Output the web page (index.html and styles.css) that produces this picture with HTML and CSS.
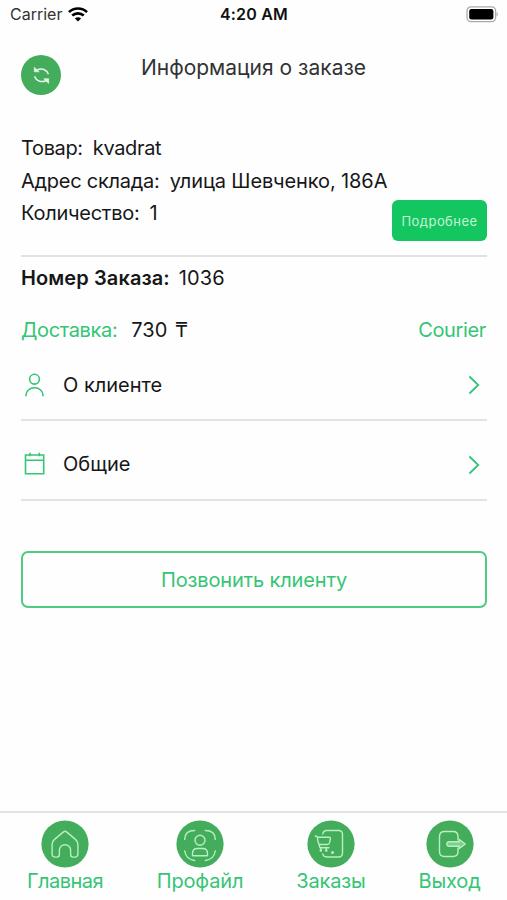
FILE: index.html
```html
<!DOCTYPE html>
<html lang="ru">
<head>
<meta charset="utf-8">
<meta name="viewport" content="width=device-width, initial-scale=1">
<title>Информация о заказе</title>
<link rel="stylesheet" href="styles.css">
</head>
<body>
<div class="status">
  <div class="carrier"><span>Carrier</span>
    <svg width="20" height="15" viewBox="0 0 20 15" fill="none" stroke="#000" stroke-width="2.7"><path d="M1 5.1C6 .3 14 .3 19 5.1M4.2 8.6c3.4-3.1 8.2-3.1 11.6 0"/><path d="M10 14.5 6.9 11.4c1.8-1.6 4.4-1.6 6.2 0z" fill="#000" stroke="none"/></svg>
  </div>
  <time class="clock">4:20 AM</time>
  <svg class="battery" width="33" height="17" viewBox="0 0 33 17"><rect x="2" y=".8" width="28.6" height="14.8" rx="4" fill="#fff" stroke="#aaa" stroke-width="1.3"/><rect x="4.2" y="2.9" width="24.2" height="10.6" rx="2.3"/><path d="M31.6 6v4.5q1.2-.8 1.2-2.2T31.6 6z" fill="#aaa"/></svg>
</div>
<header class="header">
  <button class="refresh" aria-label="Обновить">
    <svg width="40" height="40" viewBox="0 0 40 40" fill="none" stroke="#e4f5e7" stroke-width="1.5"><path d="M16 15c5-2.4 9.800-.3 11.500 4.300M25 25.700c-5 2.200-9.800 0-11.500-4.300"/><path d="M13.300 12.200v4.600h5zM27.700 28.500v-4.800h-5z" fill="#e4f5e7" stroke-width=".6"/></svg>
  </button>
  <h1 class="title">Информация о заказе</h1>
</header>
<main class="content">
  <section class="product">
    <div class="lines">
      <p><span class="product-key">Товар:</span><span class="product-name">kvadrat</span></p>
      <p><span class="address-key">Адрес склада:</span><span class="address">улица Шевченко, 186A</span></p>
      <p><span class="count-key">Количество:</span><span>1</span></p>
    </div>
    <button class="more">Подробнее</button>
  </section>
  <p class="number"><b>Номер Заказа:</b><span>1036</span></p>
  <p class="delivery"><span class="delivery-key">Доставка:</span><span class="price">730 ₸</span><span class="courier">Courier</span></p>
  <a class="row row-client">
    <svg width="26" height="26" viewBox="0 0 26 26" fill="none" stroke="#35c575" stroke-width="1.6"><circle cx="13.5" cy="7.2" r="4.9"/><path d="M5 24.300v-.7c0-4.500 3.500-7.800 8.500-7.800s8.500 3.300 8.500 7.800v.7"/></svg>
    <span class="client-label">О клиенте</span>
    <svg class="chevron" width="12" height="20" viewBox="0 0 12 20" fill="none" stroke="#35c575" stroke-width="1.8"><path d="m1.4 1.500 8.900 8.500-8.900 8.500"/></svg>
  </a>
  <a class="row row-common">
    <svg width="26" height="26" viewBox="0 0 26 26" fill="none" stroke="#35c575" stroke-width="1.6"><path d="M4.500 4h18.200v18.700H4.500zM4.500 9.200h18.200M9 1.700v3.500M18.300 1.700v3.500"/></svg>
    <span class="common-label">Общие</span>
    <svg class="chevron" width="12" height="20" viewBox="0 0 12 20" fill="none" stroke="#35c575" stroke-width="1.8"><path d="m1.4 1.500 8.900 8.500-8.900 8.500"/></svg>
  </a>
  <button class="call">Позвонить клиенту</button>
</main>
<nav class="tabs">
  <a class="tab tab-home"><svg viewBox="0 0 48 48"><circle cx="24" cy="24" r="23.6"/><path d="m22.500 11.900-9 7.500q-2.400 2-2.400 5v9.400q0 3.300 3.300 3.300h1.500q2.500 0 2.500-2.500v-4.300a5.600 5.600 0 0 1 11.200 0v4.300q0 2.500 2.500 2.500h1.500q3.300 0 3.300-3.300v-9.400q0-3-2.400-5l-9-7.500q-1.500-1.200-3 0z"/></svg><span>Главная</span></a>
  <a class="tab tab-profile"><svg viewBox="0 0 48 48"><circle cx="24" cy="24" r="23.6"/><path d="M8.700 19.500q0-9 10-9M29.300 10.500q10 0 10 9M8.700 31q1.500 8.500 10 9.500M29.300 40.500q8.500-1 10-9.500"/><path d="M24 15.300a5 5 0 1 1 0 10 5 5 0 0 1 0-10zM16.500 35.700v-2.200q0-5 5-5h5q5 0 5 5v2.200z"/></svg><span>Профайл</span></a>
  <a class="tab tab-orders"><svg viewBox="0 0 48 48"><circle cx="24" cy="24" r="23.6"/><path d="M15.800 14q.5-3.500 4-3.500H31.500q4 0 4 4V33q0 4-4 4H19.800q-3.500 0-4-3"/><path d="m8.300 16 2 .7.800 5.300q.4 2.500 2.700 2.500h6.700q1.700 0 2.100-1.800l.8-4.200q.2-1.300-1.200-1.300H10.500M12 24.500l1 3.200h9"/><path d="M13.800 27.500v3M19.300 27.500v3"/><g class="dots"><circle cx="13.800" cy="30.500" r="1.300"/><circle cx="19.300" cy="30.500" r="1.300"/><circle cx="25.500" cy="32.500" r="1.500"/></g></svg><span>Заказы</span></a>
  <a class="tab tab-exit"><svg viewBox="0 0 48 48"><circle cx="24" cy="24" r="23.6"/><path d="M32 20v-3.500q0-5-5-5h-8.500q-5 0-5 5v15q0 5 5 5H27q5 0 5-5V28"/><path class="arrow" d="M22.500 21.700h10.800v-2.200l6 4.500-6 4.500v-2.200H22.500q-1.700-.3-1.700-2.300t1.700-2.300z"/></svg><span>Выход</span></a>
</nav>
</body>
</html>
```
FILE: styles.css
```css
* { box-sizing: border-box; }
body {
  margin: 0;
  height: 900px;
  display: flex;
  flex-direction: column;
  overflow: hidden;
  background: #fefefe;
  color: #171719;
  font: 20px/32px Inter, "Noto Sans", sans-serif;
}
p, h1 { margin: 0; font-size: 20px; font-weight: 400; }
button { font: inherit; padding: 0; border: 0; }
svg { display: block; flex: none; }
.status {
  height: 30px;
  padding: 0 9px 0 10px;
  display: grid;
  grid-template-columns: 1fr auto 1fr;
  grid-template-rows: 28px;
  align-items: center;
  font-size: 16px;
  line-height: 28px;
}
.carrier { display: flex; align-items: center; gap: 6px; color: #333; }
.clock { font-weight: 600; color: #111; letter-spacing: .2px; }
.battery { justify-self: end; }
.header { height: 102px; padding: 24px 21px 0; display: grid; grid-template-columns: 40px 1fr 40px; }
.refresh { width: 40px; height: 40px; margin-top: 1px; border-radius: 50%; background: #43ad5b; }
.title { height: 28px; line-height: 28px; font-size: 21px; text-align: center; color: #333336; }
.content { flex: 1; padding: 0 20px 0 21px; }
.product {
  height: 125px;
  border-bottom: 2px solid #e2e2e4;
  display: flex;
  justify-content: space-between;
}
.lines { white-space: nowrap; line-height: 32.5px; }
.lines p { display: flex; gap: 10px; }
.product-key, .product-name { letter-spacing: -.35px; }
.address-key, .count-key { letter-spacing: -.25px; }
.address { letter-spacing: -.12px; }
.more {
  flex: none;
  width: 95px;
  height: 41px;
  margin: 68px 0 0 -60px;
  border-radius: 6px;
  background: #14c65f;
  color: #c4f4d5;
  font-size: 13px;
  letter-spacing: .45px;
}
.number { height: 42px; padding-top: 5px; display: flex; gap: 9px; letter-spacing: .1px; }
.number b { font-weight: 600; }
.delivery { height: 51px; padding-top: 15px; display: flex; }
.delivery-key, .courier, .call, .tab { color: #35c575; }
.delivery-key, .courier { letter-spacing: -.35px; }
.price { margin-left: 14px; word-spacing: 2px; }
.courier { margin-left: auto; padding-right: 1px; }
.row { display: flex; align-items: center; border-bottom: 2px solid #e2e2e4; }
.row span { margin-left: 16px; }
.chevron { margin: 1px 7px 0 auto; }
.row-client { height: 71px; }
.row-common { height: 80px; padding-top: 8px; }
.call {
  width: 100%;
  height: 57px;
  margin-top: 50px;
  border: 2px solid #4ccb83;
  border-radius: 7px;
  background: #fefefe;
  letter-spacing: -.15px;
}
.tabs {
  height: 89px;
  border-top: 2px solid #e2e2e4;
  padding: 7px 0 0;
  display: grid;
  grid-template-columns: 130px 140px 122px 115px;
}
.tab { display: flex; flex-direction: column; align-items: center; line-height: 26px; letter-spacing: -.15px; }
.tab-home { letter-spacing: -.5px; }
.tab svg { width: 48px; height: 48px; fill: none; stroke: #b9efc1; stroke-width: 1.4; stroke-linejoin: round; stroke-linecap: round; }
.tab svg > circle { fill: #43ad5b; stroke: none; }
.dots { fill: #b9efc1; stroke: none; }
.tab .arrow { fill: #7fce8e; }
```
